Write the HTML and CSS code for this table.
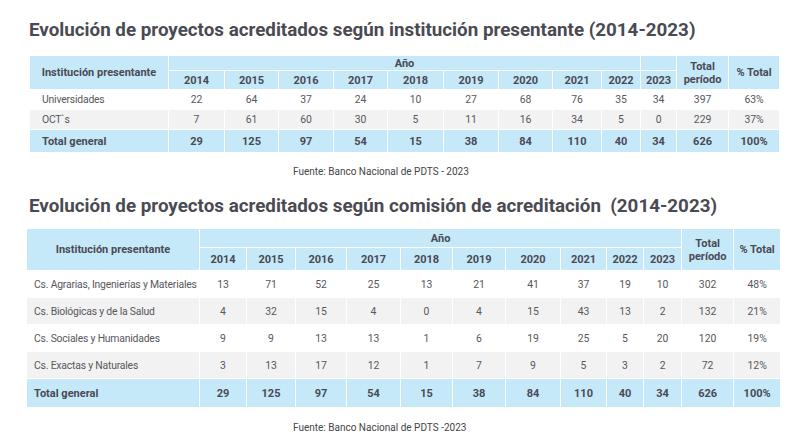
FILE: index.html
```html
<!DOCTYPE html>
<html lang="es">
<head>
<meta charset="utf-8">
<link rel="stylesheet" href="styles.css">
</head>
<body>
<div class="page">
  <h1 class="title t1">Evolución de proyectos acreditados según institución presentante (2014-2023)</h1>
  <table class="data d1">
    <colgroup>
      <col class="c-name1"><col style="width:56px"><col style="width:54px"><col style="width:55px"><col style="width:54px"><col style="width:56px"><col style="width:55px"><col style="width:54px"><col style="width:49px"><col style="width:39px"><col style="width:36px"><col style="width:52px"><col style="width:51px">
    </colgroup>
    <thead>
      <tr class="h-top">
        <th rowspan="2" class="name-h">Institución presentante</th>
        <th colspan="9">Año</th>
        <th></th>
        <th rowspan="2">Total<br>período</th>
        <th rowspan="2">% Total</th>
      </tr>
      <tr class="h-years">
        <th>2014</th><th>2015</th><th>2016</th><th>2017</th><th>2018</th><th>2019</th><th>2020</th><th>2021</th><th>2022</th><th>2023</th>
      </tr>
    </thead>
    <tbody>
      <tr class="r-white"><td class="name">Universidades</td><td>22</td><td>64</td><td>37</td><td>24</td><td>10</td><td>27</td><td>68</td><td>76</td><td>35</td><td>34</td><td>397</td><td>63%</td></tr>
      <tr class="r-grey"><td class="name">OCT`s</td><td>7</td><td>61</td><td>60</td><td>30</td><td>5</td><td>11</td><td>16</td><td>34</td><td>5</td><td>0</td><td>229</td><td>37%</td></tr>
      <tr class="r-total"><td class="name">Total general</td><td>29</td><td>125</td><td>97</td><td>54</td><td>15</td><td>38</td><td>84</td><td>110</td><td>40</td><td>34</td><td>626</td><td>100%</td></tr>
    </tbody>
  </table>
  <p class="source s1">Fuente: Banco Nacional de PDTS - 2023</p>

  <h1 class="title t2">Evolución de proyectos acreditados según comisión de acreditación&nbsp; (2014-2023)</h1>
  <table class="data d2">
    <colgroup>
      <col class="c-name2"><col style="width:47px"><col style="width:49px"><col style="width:51px"><col style="width:54px"><col style="width:52px"><col style="width:53px"><col style="width:55px"><col style="width:46px"><col style="width:37px"><col style="width:38px"><col style="width:52px"><col style="width:47px">
    </colgroup>
    <thead>
      <tr class="h-top">
        <th rowspan="2" class="name-h">Institución presentante</th>
        <th colspan="10">Año</th>
        <th rowspan="2">Total<br>período</th>
        <th rowspan="2">% Total</th>
      </tr>
      <tr class="h-years">
        <th>2014</th><th>2015</th><th>2016</th><th>2017</th><th>2018</th><th>2019</th><th>2020</th><th>2021</th><th>2022</th><th>2023</th>
      </tr>
    </thead>
    <tbody>
      <tr class="r-white"><td class="name">Cs. Agrarias, Ingenierías y Materiales</td><td>13</td><td>71</td><td>52</td><td>25</td><td>13</td><td>21</td><td>41</td><td>37</td><td>19</td><td>10</td><td>302</td><td>48%</td></tr>
      <tr class="r-grey"><td class="name">Cs. Biológicas y de la Salud</td><td>4</td><td>32</td><td>15</td><td>4</td><td>0</td><td>4</td><td>15</td><td>43</td><td>13</td><td>2</td><td>132</td><td>21%</td></tr>
      <tr class="r-white"><td class="name">Cs. Sociales y Humanidades</td><td>9</td><td>9</td><td>13</td><td>13</td><td>1</td><td>6</td><td>19</td><td>25</td><td>5</td><td>20</td><td>120</td><td>19%</td></tr>
      <tr class="r-grey"><td class="name">Cs. Exactas y Naturales</td><td>3</td><td>13</td><td>17</td><td>12</td><td>1</td><td>7</td><td>9</td><td>5</td><td>3</td><td>2</td><td>72</td><td>12%</td></tr>
      <tr class="r-total"><td class="name">Total general</td><td>29</td><td>125</td><td>97</td><td>54</td><td>15</td><td>38</td><td>84</td><td>110</td><td>40</td><td>34</td><td>626</td><td>100%</td></tr>
    </tbody>
  </table>
  <p class="source s2">Fuente: Banco Nacional de PDTS -2023</p>
</div>
</body>
</html>
```

FILE: styles.css
```css
html, body {
  margin: 0;
  padding: 0;
  background: #ffffff;
}
.page {
  width: 800px;
  height: 448px;
  overflow: hidden;
  font-family: "Roboto", "Liberation Sans", sans-serif;
  color: #57575c;
}
.title {
  margin: 0;
  font-size: 18.8px;
  line-height: 22px;
  font-weight: 700;
  color: #4a4a52;
  white-space: nowrap;
}
.t1 {
  margin-top: 19px;
  margin-left: 29px;
  margin-bottom: 14px;
}
.t2 {
  margin-top: 16px;
  margin-left: 29px;
  margin-bottom: 11px;
}
.data {
  border-collapse: collapse;
  table-layout: fixed;
  font-size: 11px;
}
.d1 {
  margin-left: 29px;
  width: 750px;
}
.d2 {
  margin-left: 26px;
  width: 754px;
}
.c-name1 { width: 139px; }
.c-name2 { width: 173px; }
.data th, .data td {
  border: 1px solid #ffffff;
  padding: 0;
  text-align: center;
  white-space: nowrap;
}
.data th {
  background: #c6e9f9;
  font-weight: 700;
  color: #4a4a55;
  line-height: 13px;
}
.d1 .h-top th { height: 14px; }
.d1 .h-years th { height: 18px; }
.d2 .h-top th { height: 18px; }
.d2 .h-years th { height: 22px; }
.data td {
  font-weight: 400;
  font-size: 10.4px;
}
.data td.name {
  letter-spacing: -0.2px;
}
.name { text-align: left !important; }
.d1 .name { padding-left: 12px; }
.d2 .name { padding-left: 7px; }
.r-white td { background: #ffffff; }
.r-grey td { background: #f2f2f2; }
.r-total td {
  background: #c6e9f9;
  font-weight: 700;
  font-size: 11px;
  color: #4a4a55;
}
.r-total td.name { letter-spacing: 0; }
.d1 .r-white td, .d1 .r-grey td { height: 19px; }
.d1 .r-total td { height: 22px; }
.d2 .r-white td, .d2 .r-grey td { height: 26px; }
.d2 .r-total td { height: 28px; }
.source {
  margin: 0;
  margin-left: 293px;
  font-size: 10px;
  line-height: 14px;
  color: #444448;
}
.s1 { margin-top: 12px; }
.s2 { margin-top: 13px; }
```
